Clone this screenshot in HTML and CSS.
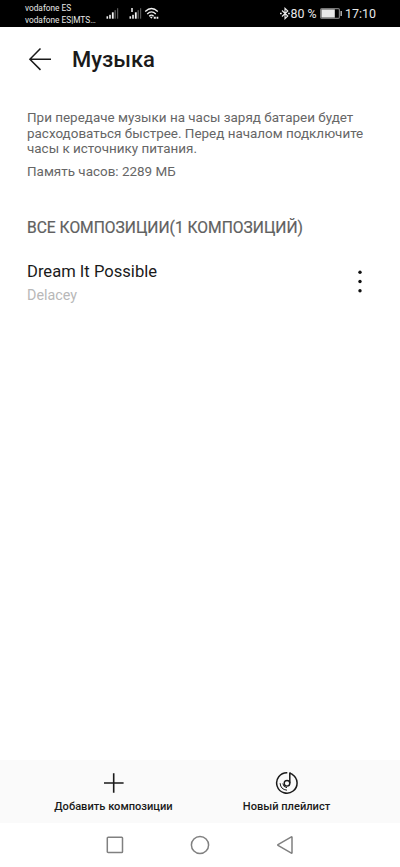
FILE: index.html
```html
<!DOCTYPE html>
<html lang="ru">
<head>
<meta charset="utf-8">
<meta name="viewport" content="width=device-width, initial-scale=1">
<title>Музыка</title>
<link rel="stylesheet" href="styles.css">
</head>
<body>
<div class="screen">
  <header class="status">
    <div class="carriers"><span>vodafone ES</span><span>vodafone ES|MTS…</span></div>
    <svg class="signals" width="54" height="14" viewBox="0 0 54 14">
      <g fill="#f2f2f2">
        <rect x="0.5" y="9.3" width="1.6" height="2.4"/><rect x="3.2" y="7.8" width="1.6" height="3.9"/><rect x="5.9" y="5.3" width="1.8" height="6.4"/>
        <rect x="23.5" y="9.3" width="1.6" height="2.4"/><rect x="26.2" y="7.8" width="1.6" height="3.9"/><rect x="28.9" y="5.3" width="1.8" height="6.4"/>
        <rect x="25" y="1" width="2" height="4" opacity=".75"/>
      </g>
      <g fill="#555"><rect x="8.5" y="3.2" width="1.4" height="8.5"/><rect x="11" y="1.2" width="1.2" height="10.5"/><rect x="31.5" y="3.2" width="1.4" height="8.5"/><rect x="34" y="1.2" width="1.2" height="10.5"/></g>
      <g fill="none" stroke="#f2f2f2" stroke-width="1.3"><path d="M39.2 4.5Q45.5-1.5 51.8 4.5M41.2 7Q45.5 2.8 49.8 7M43.2 9.2Q45.5 7 47.6 9.2"/></g>
      <path d="M45.3 11.7L43.8 9.8h3zM47.8 9.7h2v2h-2zM50.6 9.7h1.7v2h-1.7z" fill="#f2f2f2"/>
    </svg>
    <div class="state">
      <svg width="10" height="13" viewBox="0 0 10 13"><path d="M2 3.5L7.8 9 5 11.7V1.3L7.8 4 2 9.5" fill="none" stroke="#eee" stroke-width="1.1"/><path d="M0 5.8h1.7v1.4H0zM8.1 5.8h1.7v1.4H8.1z" fill="#eee"/></svg>
      <span class="percent">80 %</span>
      <svg width="22" height="11" viewBox="0 0 22 11"><rect x=".6" y=".6" width="18.8" height="9.8" rx="1.2" fill="none" stroke="#777" stroke-width="1.2"/><rect x="1.4" y="1.4" width="13.4" height="8.2" fill="#e8e8e8"/><path d="M20.5 3h1.4v5h-1.4z" fill="#bbb"/></svg>
      <span class="time">17:10</span>
    </div>
  </header>
  <div class="titlebar">
    <svg width="24" height="24" viewBox="0 0 24 24"><path d="M12.5 .5L1.9 11.2l10.6 10.7M1.9 11.2H23" fill="none" stroke="#1a1a1a" stroke-width="1.5"/></svg>
    <h1>Музыка</h1>
  </div>
  <main>
    <p class="note">При передаче музыки на часы заряд батареи будет<br>расходоваться быстрее. Перед началом подключите<br>часы к источнику питания.</p>
    <p class="memory">Память часов: 2289 МБ</p>
    <h2>ВСЕ КОМПОЗИЦИИ(1 КОМПОЗИЦИЙ)</h2>
    <div class="track">
      <div><div class="song">Dream It Possible</div><div class="artist">Delacey</div></div>
      <svg width="6" height="28" viewBox="0 0 6 28"><g fill="#111"><circle cx="3" cy="3.2" r="1.7"/><circle cx="3" cy="12.5" r="1.7"/><circle cx="3" cy="21.8" r="1.7"/></g></svg>
    </div>
  </main>
  <div class="actions">
    <div class="action">
      <svg width="24" height="24" viewBox="0 0 24 24"><path d="M11.7 2.2v19.6M2 12h19.6" stroke="#1a1a1a" stroke-width="1.6" fill="none"/></svg>
      <span>Добавить композиции</span>
    </div>
    <div class="action">
      <svg width="24" height="24" viewBox="0 0 24 24" fill="none" stroke="#1a1a1a"><path d="M12.3 1.8A10.2 10.2 0 1 0 17.2 3.3Q15.2 2.7 14.8 1.6V12.3" stroke-width="1.5"/><circle cx="12" cy="12.3" r="2.8" stroke-width="1.4"/><path d="M5.1 12.2Q5.6 18.6 12 19.2M7.8 12.5Q8.3 16.2 12 16.7" stroke-width="1"/></svg>
      <span>Новый плейлист</span>
    </div>
  </div>
  <nav>
    <svg width="18" height="18" viewBox="0 0 18 18"><rect x="1.3" y="1.3" width="15.2" height="15.2" rx=".8"/></svg>
    <svg width="20" height="20" viewBox="0 0 20 20"><circle cx="10" cy="10" r="8.6"/></svg>
    <svg width="18" height="20" viewBox="0 0 18 20"><path d="M16 2.2v15.6q0 .6-.6.3L2 10.4q-.6-.4 0-.8L15.4 1.9q.6-.3.6.3z"/></svg>
  </nav>
</div>
</body>
</html>
```
FILE: styles.css
```css
* { box-sizing: border-box; }
body { margin: 0; background: #fff; font-family: Roboto, "Liberation Sans", sans-serif; color: #1a1a1a; }
h1, h2, p { margin: 0; white-space: nowrap; }
svg { display: block; flex: none; }
.screen { width: 400px; height: 867px; display: flex; flex-direction: column; overflow: hidden; }
.status { height: 27px; background: #000; color: #e8e8e8; display: flex; align-items: flex-start; padding-left: 25px; white-space: nowrap; }
.carriers { width: 81px; display: flex; flex-direction: column; font-size: 8.3px; line-height: 12px; padding-top: 2px; }
.carriers span { width: max-content; }
.signals { margin-top: 7px; }
.state { display: flex; align-items: center; margin-left: 119.5px; height: 27px; font-size: 12.4px; }
.percent { width: 29px; margin-left: 1px; }
.time { margin-left: 3.5px; }
.titlebar { height: 64px; padding: 1px 0 0 28px; display: flex; align-items: center; gap: 20px; }
h1 { font-size: 22px; line-height: 28px; font-weight: 500; padding-top: 1px; }
main { flex: 1; padding: 19px 27px 0; }
.note, .memory { font-size: 13.45px; line-height: 15.6px; color: #666; }
.memory { margin-top: 7px; }
h2 { margin-top: 39px; font-size: 15.6px; line-height: 21px; font-weight: 400; color: #606060; -webkit-text-stroke: .2px #606060; }
.track { display: flex; justify-content: space-between; align-items: center; margin-top: 21px; padding-right: 10px; }
.song { font-size: 16.6px; line-height: 24px; }
.artist { font-size: 14.3px; line-height: 22px; color: #b8b8b8; }
.actions { height: 63px; background: #fafafa; display: flex; padding: 11px 27px 0; }
.action { width: 173px; display: flex; flex-direction: column; align-items: center; font-size: 11.1px; line-height: 16px; font-weight: 500; gap: 4px; white-space: nowrap; }
nav { height: 44px; display: flex; align-items: center; padding-left: 106px; }
nav svg { fill: none; stroke: #808080; stroke-width: 1.5; }
nav svg + svg { margin-left: 66px; }
```
